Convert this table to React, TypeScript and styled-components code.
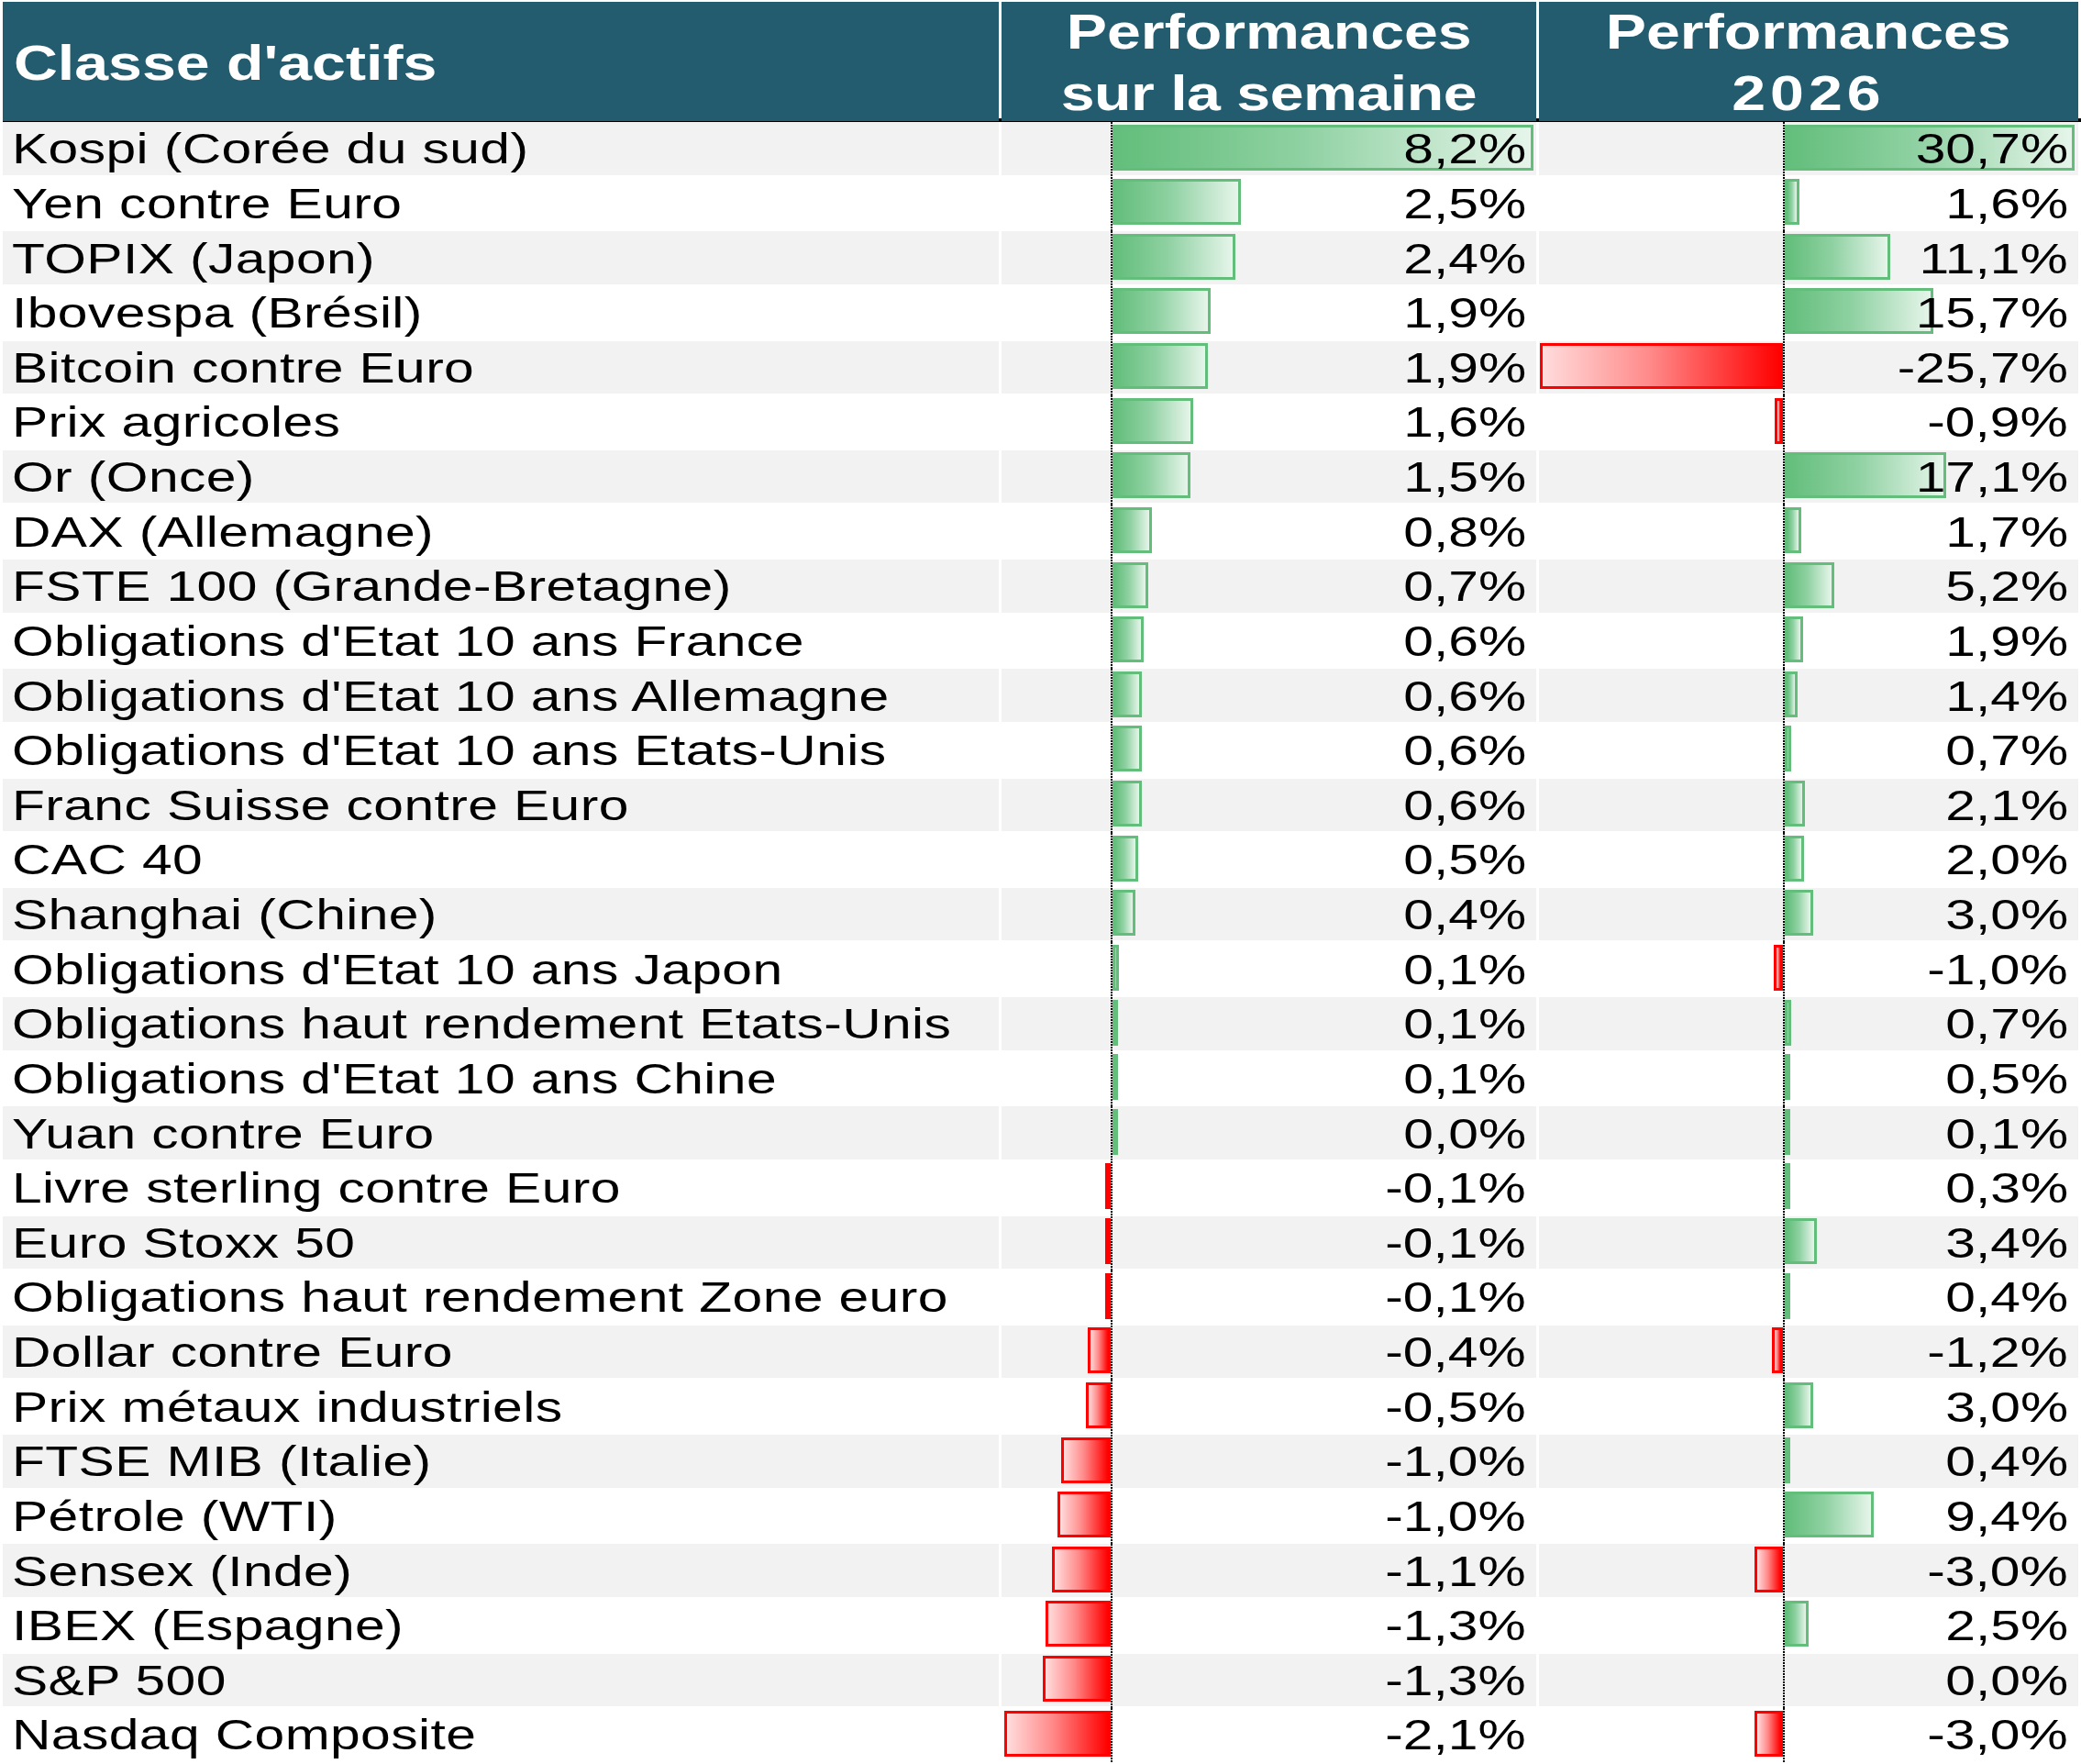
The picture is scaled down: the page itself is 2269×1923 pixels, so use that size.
import React from "react";
import styled, { createGlobalStyle } from "styled-components";

const COLS = "1086px 583px 588px";
const WEEK_AXIS = 119;
const YTD_AXIS = 266;
const WEEK_SCALE = 56; // px per %
const YTD_SCALE = 10.3; // px per %

const GlobalStyle = createGlobalStyle`
  html, body {
    margin: 0;
    padding: 0;
    background: #ffffff;
  }
  body {
    font-family: "Liberation Sans", Arial, Helvetica, sans-serif;
    color: #000;
  }
`;

const Page = styled.div`
  width: 2269px;
  box-sizing: border-box;
  padding: 2px 0 0 3px;
  background: #fff;
`;

const HeaderRow = styled.div`
  display: grid;
  grid-template-columns: ${COLS};
  column-gap: 3px;
  height: 131px;
  box-sizing: border-box;
  border-bottom: 4px solid #000;
`;

const TitleCell = styled.div`
  background: #235c6f;
  color: #fff;
  font-weight: 700;
  font-size: 53px;
  display: flex;
  align-items: center;
  padding: 3px 0 0 12px;
  box-sizing: border-box;
  white-space: nowrap;
`;

const PerfCell = styled.div`
  background: #235c6f;
  color: #fff;
  font-weight: 700;
  font-size: 53px;
  line-height: 60px;
  display: flex;
  flex-direction: column;
  align-items: center;
  justify-content: flex-start;
  row-gap: 7px;
  padding-top: 3px;
  box-sizing: border-box;
  white-space: nowrap;
`;

/* The source table is rendered with horizontally widened glyphs */
const Wide = styled.span<{ $origin: "left" | "center" | "right"; $spacing?: number }>`
  display: inline-block;
  transform: scaleX(1.25);
  transform-origin: ${(p) => p.$origin} center;
  letter-spacing: ${(p) => p.$spacing ?? 0}px;
`;

const Row = styled.div`
  display: grid;
  grid-template-columns: ${COLS};
  column-gap: 3px;
  height: 59.64px;
  padding-bottom: 2px;
  box-sizing: border-box;
`;

const LabelCell = styled.div<{ $shade: boolean }>`
  background: ${(p) => (p.$shade ? "#f2f2f2" : "#ffffff")};
  display: flex;
  align-items: center;
  padding-left: 10px;
  font-size: 47px;
  white-space: nowrap;
  overflow: hidden;
`;

const ValueCell = styled.div<{ $shade: boolean }>`
  position: relative;
  background: ${(p) => (p.$shade ? "#f2f2f2" : "#ffffff")};
  display: flex;
  align-items: center;
  justify-content: flex-end;
  padding-right: 11px;
  font-size: 47px;
  white-space: nowrap;
`;

const BarLayer = styled.div<{ $axis: number }>`
  position: absolute;
  left: 0;
  right: 0;
  top: 0;
  bottom: -2px;
  display: grid;
  grid-template-columns: ${(p) => p.$axis}px 2px 1fr;
  pointer-events: none;
`;

const Side = styled.div<{ $neg: boolean }>`
  display: flex;
  justify-content: ${(p) => (p.$neg ? "flex-end" : "flex-start")};
  align-items: flex-start;
  padding-top: 2.5px;
  min-width: 0;
`;

const Bar = styled.div<{ $neg: boolean }>`
  height: 50px;
  flex: none;
  box-sizing: border-box;
  border: 3px solid ${(p) => (p.$neg ? "#ff0000" : "#63be7b")};
  background: ${(p) =>
    p.$neg
      ? "linear-gradient(to right, #ffdcdc 0%, #ff8a8a 45%, #ff0000 100%)"
      : "linear-gradient(to right, #63be7b 0%, #8fd1a2 45%, #e6f5ea 100%)"};
`;

const Axis = styled.div`
  background: repeating-linear-gradient(
    to bottom,
    #000 0px,
    #000 2px,
    #ffffff 2px,
    #ffffff 3px
  );
`;

const Num = styled.span`
  position: relative;
  z-index: 1;
`;

type Item = {
  label: string;
  week: string;
  ytd: string;
  w: number;
  y: number;
};

const DATA: Item[] = [
  { label: "Kospi (Corée du sud)", week: "8,2%", ytd: "30,7%", w: 8.2, y: 30.7 },
  { label: "Yen contre Euro", week: "2,5%", ytd: "1,6%", w: 2.5, y: 1.6 },
  { label: "TOPIX (Japon)", week: "2,4%", ytd: "11,1%", w: 2.39, y: 11.2 },
  { label: "Ibovespa (Brésil)", week: "1,9%", ytd: "15,7%", w: 1.91, y: 15.7 },
  { label: "Bitcoin contre Euro", week: "1,9%", ytd: "-25,7%", w: 1.86, y: -25.7 },
  { label: "Prix agricoles", week: "1,6%", ytd: "-0,9%", w: 1.57, y: -0.9 },
  { label: "Or (Once)", week: "1,5%", ytd: "17,1%", w: 1.52, y: 17.1 },
  { label: "DAX (Allemagne)", week: "0,8%", ytd: "1,7%", w: 0.77, y: 1.7 },
  { label: "FSTE 100 (Grande-Bretagne)", week: "0,7%", ytd: "5,2%", w: 0.7, y: 5.2 },
  { label: "Obligations d'Etat 10 ans France", week: "0,6%", ytd: "1,9%", w: 0.61, y: 1.9 },
  { label: "Obligations d'Etat 10 ans Allemagne", week: "0,6%", ytd: "1,4%", w: 0.57, y: 1.4 },
  { label: "Obligations d'Etat 10 ans Etats-Unis", week: "0,6%", ytd: "0,7%", w: 0.57, y: 0.7 },
  { label: "Franc Suisse contre Euro", week: "0,6%", ytd: "2,1%", w: 0.57, y: 2.1 },
  { label: "CAC 40", week: "0,5%", ytd: "2,0%", w: 0.5, y: 2.0 },
  { label: "Shanghai (Chine)", week: "0,4%", ytd: "3,0%", w: 0.44, y: 3.0 },
  { label: "Obligations d'Etat 10 ans Japon", week: "0,1%", ytd: "-1,0%", w: 0.13, y: -1.0 },
  { label: "Obligations haut rendement Etats-Unis", week: "0,1%", ytd: "0,7%", w: 0.09, y: 0.7 },
  { label: "Obligations d'Etat 10 ans Chine", week: "0,1%", ytd: "0,5%", w: 0.09, y: 0.5 },
  { label: "Yuan contre Euro", week: "0,0%", ytd: "0,1%", w: 0.04, y: 0.14 },
  { label: "Livre sterling contre Euro", week: "-0,1%", ytd: "0,3%", w: -0.1, y: 0.3 },
  { label: "Euro Stoxx 50", week: "-0,1%", ytd: "3,4%", w: -0.11, y: 3.4 },
  { label: "Obligations haut rendement Zone euro", week: "-0,1%", ytd: "0,4%", w: -0.11, y: 0.4 },
  { label: "Dollar contre Euro", week: "-0,4%", ytd: "-1,2%", w: -0.44, y: -1.2 },
  { label: "Prix métaux industriels", week: "-0,5%", ytd: "3,0%", w: -0.49, y: 3.0 },
  { label: "FTSE MIB (Italie)", week: "-1,0%", ytd: "0,4%", w: -0.96, y: 0.4 },
  { label: "Pétrole (WTI)", week: "-1,0%", ytd: "9,4%", w: -1.04, y: 9.4 },
  { label: "Sensex (Inde)", week: "-1,1%", ytd: "-3,0%", w: -1.15, y: -3.0 },
  { label: "IBEX (Espagne)", week: "-1,3%", ytd: "2,5%", w: -1.27, y: 2.5 },
  { label: "S&P 500", week: "-1,3%", ytd: "0,0%", w: -1.33, y: 0 },
  { label: "Nasdaq Composite", week: "-2,1%", ytd: "-3,0%", w: -2.08, y: -3.0 },
];

function DataBar({ value, scale, axis }: { value: number; scale: number; axis: number }) {
  const width = Math.abs(value) * scale;
  const neg = value < 0;
  const bar = width >= 1 ? <Bar $neg={neg} style={{ width: `${width}px` }} /> : null;
  return (
    <BarLayer $axis={axis}>
      <Side $neg={true}>{neg ? bar : null}</Side>
      <Axis />
      <Side $neg={false}>{!neg ? bar : null}</Side>
    </BarLayer>
  );
}

export default function App() {
  return (
    <>
      <GlobalStyle />
      <Page>
        <HeaderRow>
          <TitleCell>
            <Wide $origin="left">Classe d'actifs</Wide>
          </TitleCell>
          <PerfCell>
            <Wide $origin="center">Performances</Wide>
            <Wide $origin="center" $spacing={-0.4}>sur la semaine</Wide>
          </PerfCell>
          <PerfCell>
            <Wide $origin="center">Performances</Wide>
            <Wide $origin="center" $spacing={4}>2026</Wide>
          </PerfCell>
        </HeaderRow>
        {DATA.map((d, i) => {
          const shade = i % 2 === 0;
          return (
            <Row key={d.label}>
              <LabelCell $shade={shade}>
                <Wide $origin="left" $spacing={0.33}>{d.label}</Wide>
              </LabelCell>
              <ValueCell $shade={shade}>
                <DataBar value={d.w} scale={WEEK_SCALE} axis={WEEK_AXIS} />
                <Num>
                  <Wide $origin="right">{d.week}</Wide>
                </Num>
              </ValueCell>
              <ValueCell $shade={shade}>
                <DataBar value={d.y} scale={YTD_SCALE} axis={YTD_AXIS} />
                <Num>
                  <Wide $origin="right">{d.ytd}</Wide>
                </Num>
              </ValueCell>
            </Row>
          );
        })}
      </Page>
    </>
  );
}
